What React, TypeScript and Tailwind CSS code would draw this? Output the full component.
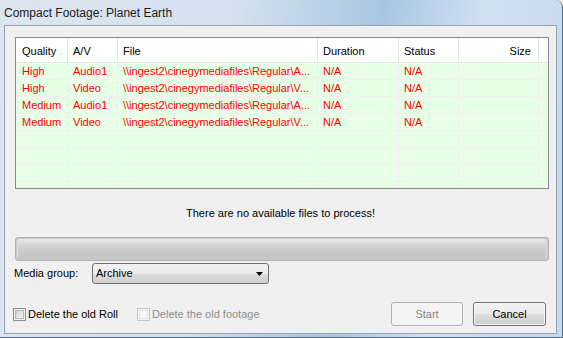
const rows = [
  { q: "High", av: "Audio1", file: "\\\\ingest2\\cinegymediafiles\\Regular\\A...", dur: "N/A", st: "N/A" },
  { q: "High", av: "Video", file: "\\\\ingest2\\cinegymediafiles\\Regular\\V...", dur: "N/A", st: "N/A" },
  { q: "Medium", av: "Audio1", file: "\\\\ingest2\\cinegymediafiles\\Regular\\A...", dur: "N/A", st: "N/A" },
  { q: "Medium", av: "Video", file: "\\\\ingest2\\cinegymediafiles\\Regular\\V...", dur: "N/A", st: "N/A" },
];

const cols = "grid grid-cols-[52px_50px_200px_81px_60px_80px_9px]";

function Checkbox({ disabled }: { disabled?: boolean }) {
  return (
    <span
      className={`w-[13px] h-[13px] border flex items-center justify-center ${
        disabled ? "border-[#c4c4c4] bg-[#f4f4f4]" : "border-[#8e8f8f] bg-[#f4f4f4]"
      }`}
    >
      <span
        className={`w-[9px] h-[9px] border ${
          disabled
            ? "border-[#e3e3e3] bg-[#f7f7f7]"
            : "border-[#b5b8bb] bg-[linear-gradient(135deg,#cbcfd5,#f6f6f6)]"
        }`}
      />
    </span>
  );
}

export default function App() {
  return (
    <div className="w-[563px] h-[338px] overflow-hidden bg-white font-['Liberation_Sans',Arial,sans-serif] text-[11px] text-black">
      <div className="w-[563px] h-[338px] flex flex-col rounded-tr-[7px] border-r border-b border-[#55697f] bg-[linear-gradient(100deg,#dde6f0_0%,#d5e1ee_38%,#a8c6e3_62%,#cfe0f1_78%,#c4d9ee_100%)] pl-[4px] pr-[5px]">
        {/* title */}
        <div className="h-[25px] shrink-0 flex items-center text-[12px] text-[#1b1b1b] pt-[1px]">
          Compact Footage: Planet Earth
        </div>

        {/* client area */}
        <div className="h-[309px] shrink-0 border border-[#95a3b3] bg-[#f0f0f0] flex flex-col">
          {/* list */}
          <div className="ml-[10px] mt-[11px] w-[534px] h-[152px] border border-[#828790] bg-[#e6ffe6] overflow-hidden">
            <div className={`${cols} h-[25px] bg-white border-b border-[#e5e5e5]`}>
              {["Quality", "A/V", "File", "Duration", "Status", "Size", ""].map((h, i) => (
                <div
                  key={i}
                  className={`flex items-center pt-[3px] border-r border-[#e5e5e5] ${
                    i === 0 ? "pl-[6px]" : "pl-[5px]"
                  } ${i === 5 ? "justify-end pr-[7px]" : ""} ${i === 6 ? "border-r-0" : ""}`}
                >
                  {h}
                </div>
              ))}
            </div>
            {Array.from({ length: 8 }).map((_, r) => {
              const d = rows[r];
              const cells = d ? [d.q, d.av, d.file, d.dur, d.st, "", ""] : ["", "", "", "", "", "", ""];
              return (
                <div key={r} className={`${cols} h-[17px]`}>
                  {cells.map((c, i) => (
                    <div
                      key={i}
                      className={`flex items-center pt-[1px] whitespace-nowrap overflow-hidden border-b border-r border-[#f0f0f0] text-[#ff0000] ${
                        i === 0 ? "pl-[6px]" : "pl-[5px]"
                      } ${i === 6 ? "border-r-0" : ""}`}
                    >
                      {c}
                    </div>
                  ))}
                </div>
              );
            })}
          </div>

          {/* message */}
          <div className="h-[48px] flex items-center justify-center">
            There are no available files to process!
          </div>

          {/* progress bar */}
          <div className="ml-[10px] w-[534px] h-[24px] rounded-[3px] border border-[#b2b2b2] bg-[#c8c8c8] p-[1px]">
            <div className="w-full h-full rounded-[2px] bg-[linear-gradient(180deg,#ececec_0%,#d4d4d4_30%,#c9c9c9_60%,#c6c6c6_100%)] border-x border-[#dcdcdc]" />
          </div>

          {/* media group */}
          <div className="mt-[2px] h-[21px] flex items-center">
            <span className="ml-[9px] w-[78px]">Media group:</span>
            <div className="w-[177px] h-[21px] rounded-[3px] border border-[#707070] bg-[linear-gradient(180deg,#f2f2f2_0%,#ebebeb_50%,#dddddd_51%,#cfcfcf_100%)] flex items-center pl-[3px] pr-[5px]">
              <span className="flex-1">Archive</span>
              <svg width="7" height="4" viewBox="0 0 7 4">
                <path d="M0 0H7L3.5 4Z" fill="#000" />
              </svg>
            </div>
          </div>

          {/* bottom row */}
          <div className="mt-[18px] h-[24px] flex items-center">
            <div className="ml-[8px] flex items-center gap-[2px]">
              <Checkbox />
              <span>Delete the old Roll</span>
            </div>
            <div className="ml-[19px] flex items-center gap-[2px] text-[#8d8d8d]">
              <Checkbox disabled />
              <span>Delete the old footage</span>
            </div>
            <div className="ml-auto mr-[10px] flex gap-[10px]">
              <button className="w-[72px] h-[24px] rounded-[3px] border border-[#adb2b5] bg-[#f4f4f4] text-[#838383]">
                Start
              </button>
              <button className="w-[73px] h-[24px] rounded-[3px] border border-[#707070] bg-[linear-gradient(180deg,#f2f2f2_0%,#ebebeb_50%,#dddddd_51%,#cfcfcf_100%)] shadow-[inset_0_0_0_1px_#fbfbfb]">
                Cancel
              </button>
            </div>
          </div>
        </div>
        <div className="h-[3px] shrink-0" />
      </div>
    </div>
  );
}
